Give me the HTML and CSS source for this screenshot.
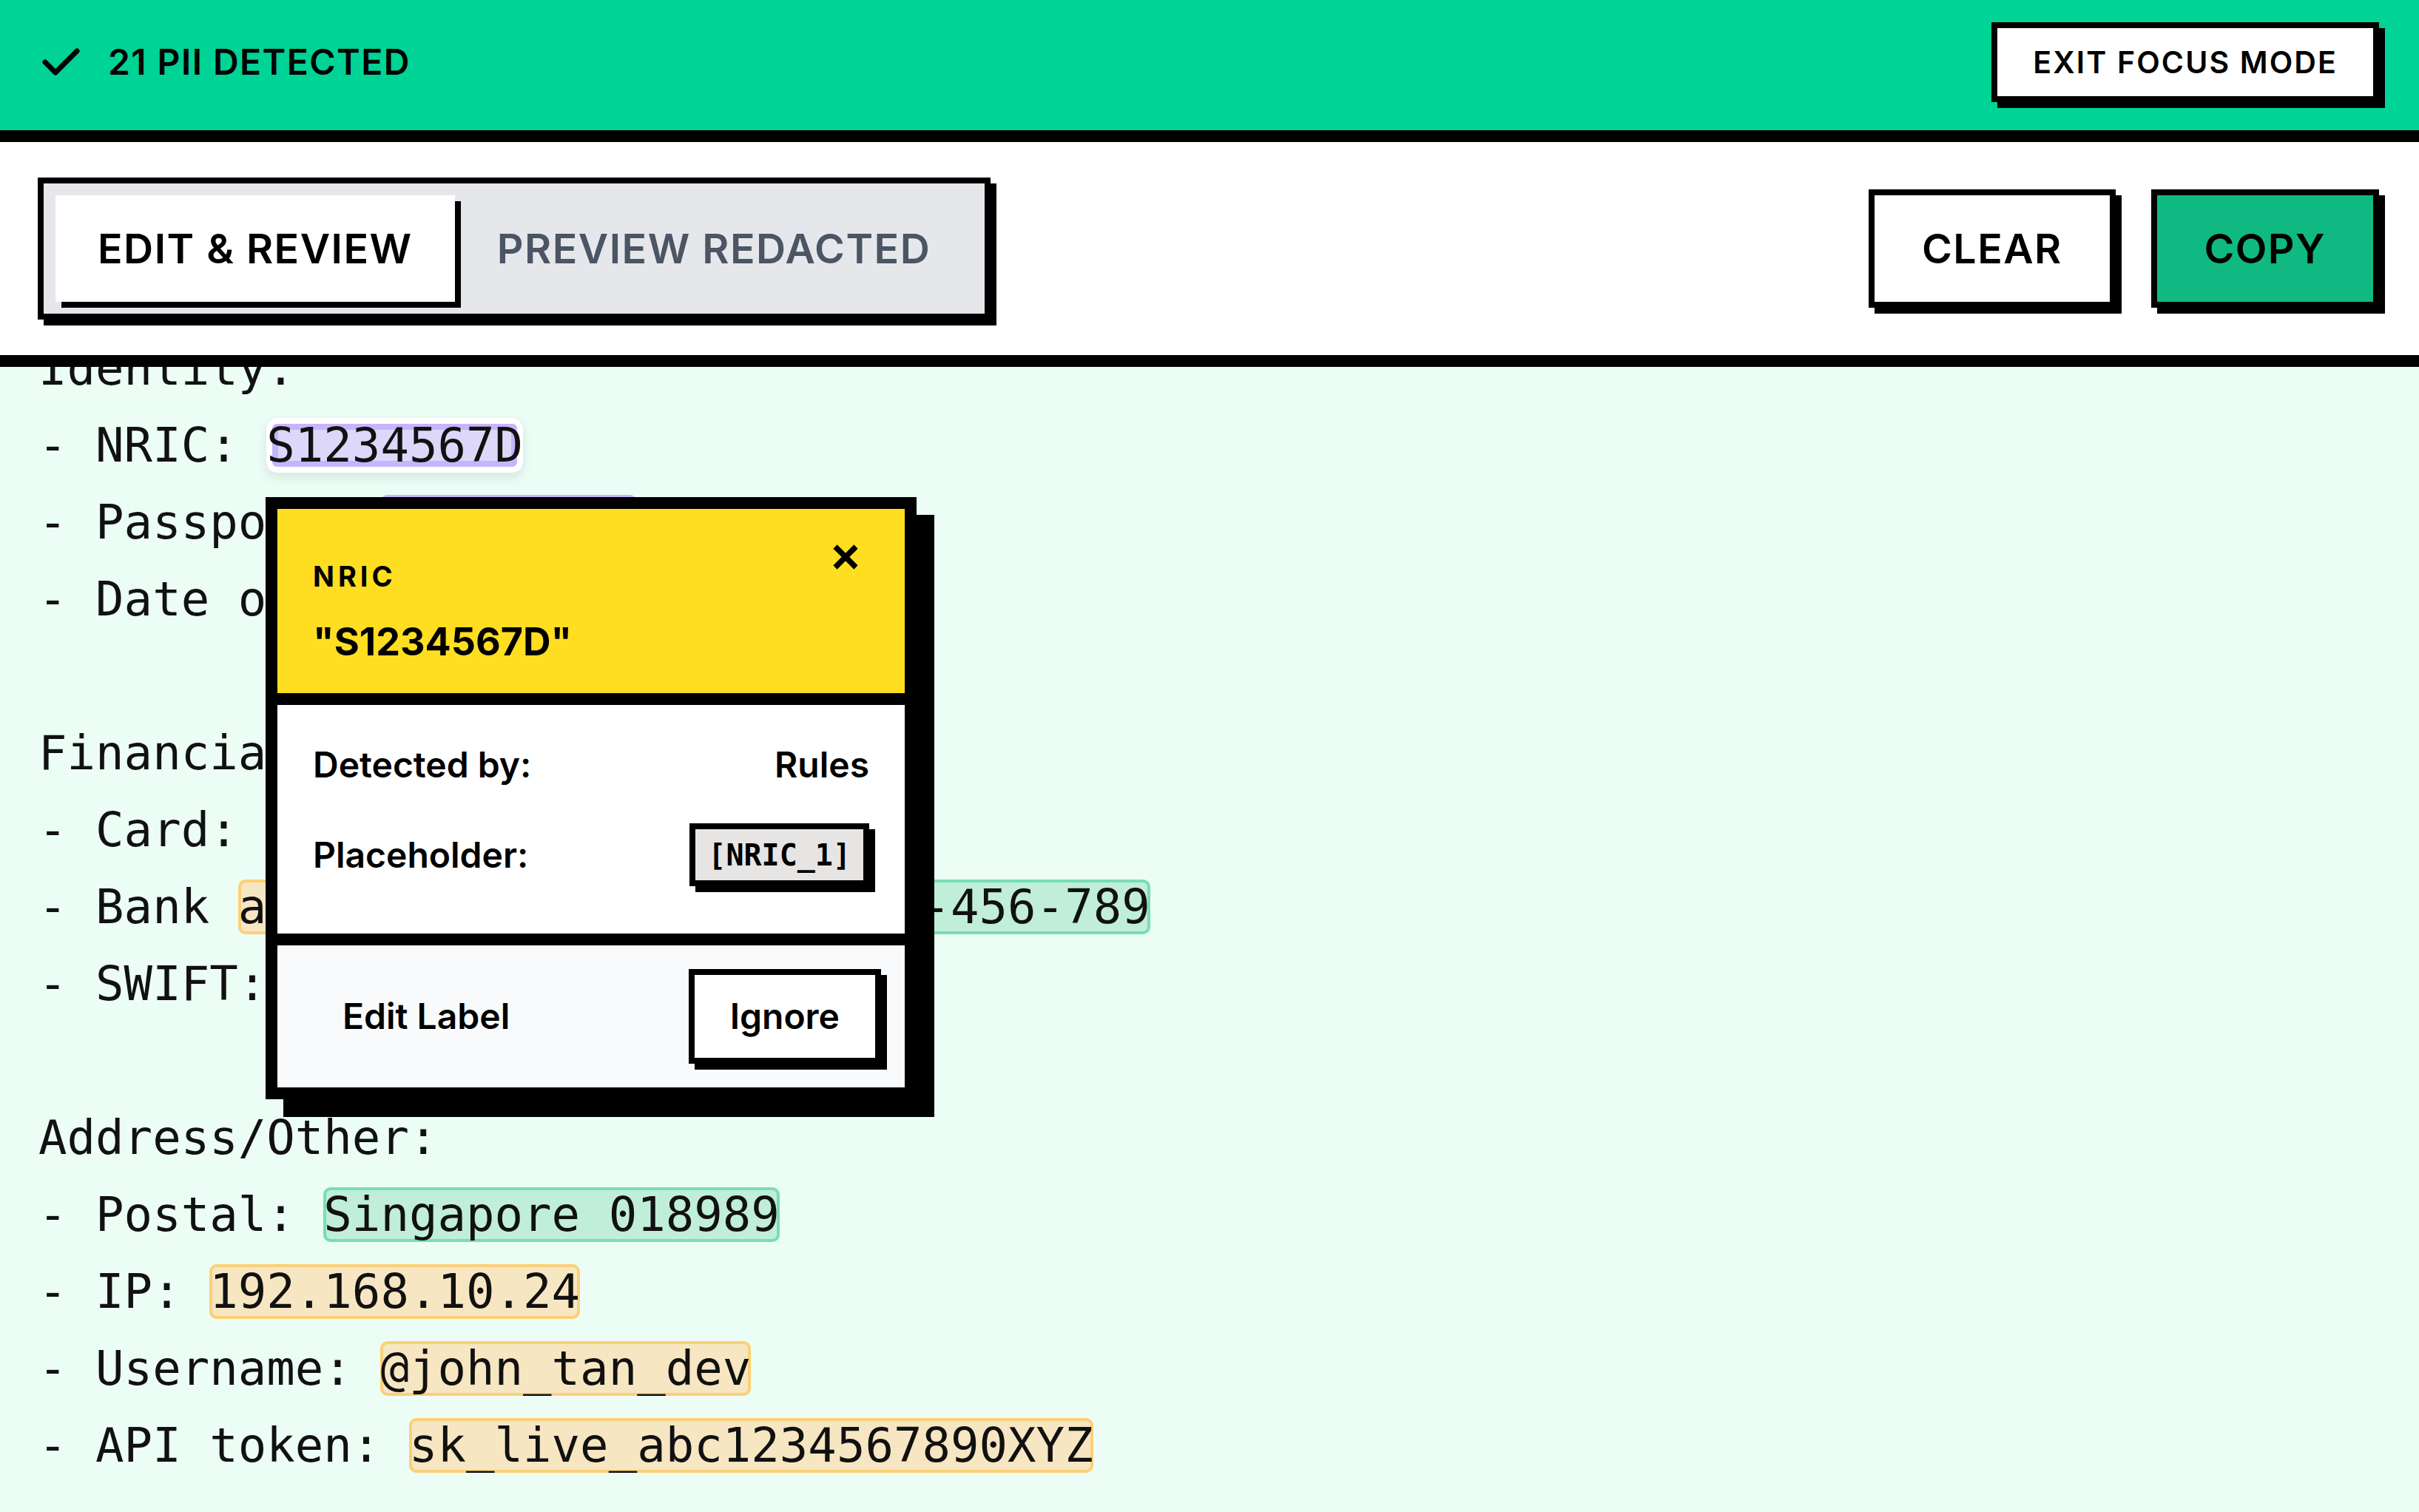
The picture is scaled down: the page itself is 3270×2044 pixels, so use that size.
FILE: index.html
```html
<!DOCTYPE html>
<html lang="en">
<head>
<meta charset="utf-8">
<title>PII Review — Focus Mode</title>
<link rel="stylesheet" href="styles.css">
</head>
<body>
<div class="app">
  <header class="status-bar">
    <div class="status">
      <svg class="status-icon" viewBox="0 0 52 42" aria-hidden="true"><path d="M5 21 L19 35 L48 6"/></svg>
      <span class="status-text">21 PII DETECTED</span>
    </div>
    <button class="btn btn-exit">EXIT FOCUS MODE</button>
  </header>

  <nav class="toolbar">
    <div class="tabs">
      <button class="tab tab-active">EDIT &amp; REVIEW</button>
      <button class="tab">PREVIEW REDACTED</button>
    </div>
    <div class="actions">
      <button class="btn btn-lg">CLEAR</button>
      <button class="btn btn-lg btn-primary">COPY</button>
    </div>
  </nav>

  <main class="editor">
<pre class="doc">Identity:
- NRIC: <span class="pii pii-violet pii-active">S1234567D</span>
- Passport: <span class="pii pii-violet">K1234567A</span>
- Date of birth: <span class="pii pii-amber">14/02/1988</span>

Financial:
- Card: <span class="pii pii-amber">4111 1111 1111 1111</span>
- Bank <span class="pii pii-amber">account</span>: <span class="pii pii-green">DBS Savings 123-456-789</span>
- SWIFT: <span class="pii pii-amber">DBSSSGSGXXX</span>

Address/Other:
- Postal: <span class="pii pii-green">Singapore 018989</span>
- IP: <span class="pii pii-amber">192.168.10.24</span>
- Username: <span class="pii pii-amber">@john_tan_dev</span>
- API token: <span class="pii pii-amber">sk_live_abc1234567890XYZ</span></pre>

    <section class="popover" role="dialog" aria-label="NRIC details">
      <div class="pop-head">
        <div class="pop-title">
          <div class="pop-kind">NRIC</div>
          <div class="pop-value">"S1234567D"</div>
        </div>
        <button class="pop-close" aria-label="Close">
          <svg viewBox="0 0 40 40" aria-hidden="true"><path d="M6 6 L34 34 M34 6 L6 34"/></svg>
        </button>
      </div>
      <div class="pop-body">
        <div class="pop-row">
          <span>Detected by:</span>
          <span>Rules</span>
        </div>
        <div class="pop-row">
          <span>Placeholder:</span>
          <span class="chip">[NRIC_1]</span>
        </div>
      </div>
      <div class="pop-foot">
        <button class="pop-btn pop-btn-ghost">Edit Label</button>
        <button class="pop-btn pop-btn-solid">Ignore</button>
      </div>
    </section>
  </main>
</div>
</body>
</html>
```

FILE: styles.css
```css
* {
  box-sizing: border-box;
}

html,
body {
  margin: 0;
  padding: 0;
  width: 3270px;
  height: 2044px;
  overflow: hidden;
  background: #ecfdf5;
}

body {
  font-family: Inter, "Liberation Sans", sans-serif;
  color: #000;
}

button {
  font-family: inherit;
  color: inherit;
  cursor: pointer;
}

.app {
  display: flex;
  flex-direction: column;
  height: 2044px;
}

/* ---------- status bar ---------- */
.status-bar {
  flex: none;
  height: 192px;
  background: #00d396;
  border-bottom: 16px solid #000;
  padding: 0 54px 8px 56px;
  display: flex;
  align-items: center;
  justify-content: space-between;
}

.status {
  display: flex;
  align-items: center;
  gap: 38px;
}

.status-icon {
  width: 52px;
  height: 42px;
  fill: none;
  stroke: #000;
  stroke-width: 7;
  stroke-linecap: round;
  stroke-linejoin: round;
}

.status-text {
  font-size: 48px;
  font-weight: 600;
  letter-spacing: 0.03em;
  line-height: 1;
}

.btn {
  border: 8px solid #000;
  background: #fff;
  box-shadow: 8px 8px 0 #000;
  font-weight: 600;
  line-height: 1;
  display: inline-flex;
  align-items: center;
  justify-content: center;
}

.btn-exit {
  height: 108px;
  padding: 0 48px;
  font-size: 41px;
  letter-spacing: 0.052em;
}

/* ---------- toolbar ---------- */
.toolbar {
  flex: none;
  height: 304px;
  background: #fff;
  border-bottom: 16px solid #000;
  padding: 0 54px 0 51px;
  display: flex;
  align-items: center;
  justify-content: space-between;
  position: relative;
  z-index: 2;
}

.tabs {
  display: flex;
  background: #e5e7eb;
  border: 8px solid #000;
  box-shadow: 8px 8px 0 #000;
  padding: 16px;
}

.tab {
  height: 144px;
  padding: 0 57px;
  border: 0;
  background: transparent;
  font-size: 55.5px;
  font-weight: 600;
  letter-spacing: 0.027em;
  color: #4b5563;
  line-height: 1;
}

.tab-active {
  background: #fff;
  color: #000;
  box-shadow: 8px 8px 0 #000;
}

.actions {
  display: flex;
  gap: 48px;
}

.btn-lg {
  height: 160px;
  padding: 0 64px;
  font-size: 55.5px;
  letter-spacing: 0.025em;
}

.btn-primary {
  background: #10b981;
}

/* ---------- editor ---------- */
.editor {
  flex: 1;
  position: relative;
  overflow: hidden;
  background: #ecfdf5;
  padding: 0 52px;
}

.doc {
  margin: -50px 0 0;
  font-family: "DejaVu Sans Mono", "Liberation Mono", monospace;
  font-size: 64px;
  line-height: 104px;
  color: #111;
  white-space: pre;
}

.pii {
  border-radius: 10px;
  background: var(--fill);
  box-shadow: inset 0 0 0 4px var(--ring);
}

.pii-violet {
  --fill: #ddd6fe;
  --ring: #c4b5fd;
}

.pii-amber {
  --fill: #f7e6c2;
  --ring: #fcd077;
}

.pii-green {
  --fill: #c0eed9;
  --ring: #77deb5;
}

.pii-active {
  --fill: #ddd7fa;
  border-radius: 14px;
  box-shadow: inset 0 0 0 8px #fff, inset 0 0 0 16px #c4b5fd, 0 6px 14px rgba(15, 23, 42, 0.10);
}

/* ---------- entity popover ---------- */
.popover {
  position: absolute;
  left: 359px;
  top: 176px;
  width: 880px;
  border: 16px solid #000;
  box-shadow: 24px 24px 0 #000;
  background: #fff;
  z-index: 3;
}

.pop-head {
  background: #ffde21;
  border-bottom: 16px solid #000;
  padding: 48px 48px 43px;
  display: flex;
  justify-content: space-between;
  align-items: flex-start;
}

.pop-kind {
  margin-top: 24px;
  font-size: 38px;
  font-weight: 700;
  letter-spacing: 0.13em;
  line-height: 1;
}

.pop-value {
  margin-top: 44px;
  font-size: 52px;
  font-weight: 700;
  line-height: 1;
}

.pop-close {
  width: 40px;
  height: 40px;
  margin: -3px 12px 0 0;
  padding: 0;
  border: 0;
  background: transparent;
}

.pop-close svg {
  display: block;
  width: 40px;
  height: 40px;
  fill: none;
  stroke: #000;
  stroke-width: 7.5;
}

.pop-body {
  padding: 48px 48px 64px;
  display: flex;
  flex-direction: column;
  gap: 46px;
  font-size: 48px;
  font-weight: 600;
  line-height: 66px;
}

.pop-row {
  display: flex;
  align-items: center;
  justify-content: space-between;
}

.chip {
  height: 85px;
  display: inline-flex;
  align-items: center;
  padding: 0 17px;
  border: 8px solid #000;
  background: #e7e5e4;
  box-shadow: 8px 8px 0 #000;
  font-family: "DejaVu Sans Mono", "Liberation Mono", monospace;
  font-size: 40px;
  font-weight: 700;
  line-height: 1;
}

.pop-foot {
  border-top: 16px solid #000;
  background: #f8fafc;
  padding: 32px;
  display: flex;
  align-items: center;
  justify-content: space-between;
}

.pop-btn {
  height: 128px;
  padding: 0 48px;
  border: 8px solid transparent;
  background: transparent;
  font-size: 48px;
  font-weight: 600;
  line-height: 1;
}

.pop-btn-solid {
  border-color: #000;
  background: #fff;
  box-shadow: 8px 8px 0 #000;
}
```
